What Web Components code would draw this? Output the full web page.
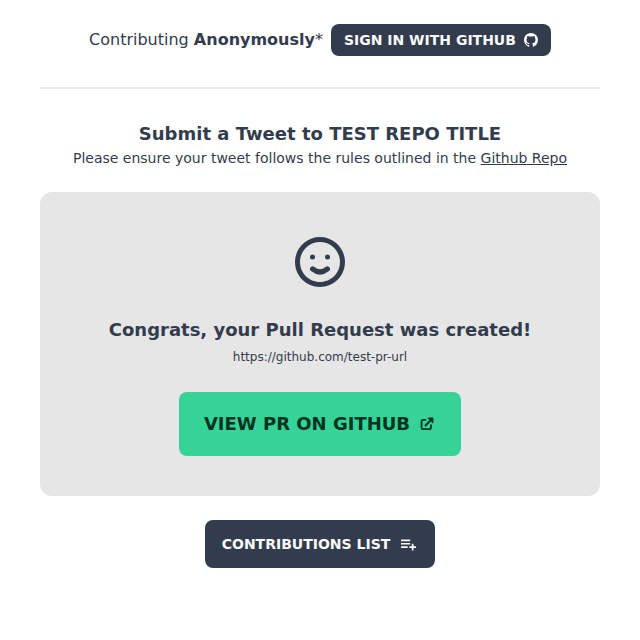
<!DOCTYPE html>
<html lang="en">
<head>
<meta charset="utf-8">
<title>Submit a Tweet</title>
<style>
body{margin:0;background:#fff;color:#333c4d;font-family:"DejaVu Sans",sans-serif;font-size:16px;line-height:24px}
</style>
</head>
<body>
<tweet-page></tweet-page>
<script>
const icons = {
  github: ['0 0 24 24', '<path fill="currentColor" d="M12 0C5.374 0 0 5.373 0 12c0 5.302 3.438 9.8 8.207 11.387.599.111.793-.261.793-.577v-2.234c-3.338.726-4.033-1.416-4.033-1.416-.546-1.387-1.333-1.756-1.333-1.756-1.089-.745.083-.729.083-.729 1.205.084 1.839 1.237 1.839 1.237 1.07 1.834 2.807 1.304 3.492.997.107-.775.418-1.305.762-1.604-2.665-.305-5.467-1.334-5.467-5.931 0-1.311.469-2.381 1.236-3.221-.124-.303-.535-1.524.117-3.176 0 0 1.008-.322 3.301 1.23A11.5 11.5 0 0112 5.803c1.02.005 2.047.138 3.006.404 2.291-1.552 3.297-1.23 3.297-1.23.653 1.653.242 2.874.118 3.176.77.84 1.235 1.911 1.235 3.221 0 4.609-2.807 5.624-5.479 5.921.43.372.823 1.102.823 2.222v3.293c0 .319.192.694.801.576C20.566 21.797 24 17.3 24 12c0-6.627-5.373-12-12-12z"/>'],
  smile: ['0 0 24 24', '<path fill="currentColor" d="M12 2C6.486 2 2 6.486 2 12s4.486 10 10 10 10-4.486 10-10S17.514 2 12 2zm0 18c-4.411 0-8-3.589-8-8s3.589-8 8-8 8 3.589 8 8-3.589 8-8 8z"/><circle cx="9" cy="10" r="1" fill="currentColor"/><circle cx="15" cy="10" r="1" fill="currentColor"/><path d="M9.1 14.8Q12 17.2 14.9 14.8" fill="none" stroke="currentColor" stroke-width="2.15" stroke-linecap="round"/>'],
  external: ['0 0 24 24', '<path fill="none" stroke="currentColor" stroke-width="2.4" stroke-linejoin="round" stroke-linecap="round" d="M10 6.5H6.7a2 2 0 0 0-2 2v8.4a2 2 0 0 0 2 2h8.6a2 2 0 0 0 2-2v-3.3M14.2 4.6h5.2v5.2M10 14L19 5M15.5 4.9l3.6 3.6"/>'],
  list: ['.4 .3 24 24', '<path fill="currentColor" d="M19 15v-3h-2v3h-3v2h3v3h2v-3h3v-2h-.937zM4 7h11v2H4zm0 4h11v2H4zm0 4h8v2H4z"/>']
};
class UiIcon extends HTMLElement {
  connectedCallback(){
    const [box, art] = icons[this.getAttribute('name')];
    this.attachShadow({mode:'open'}).innerHTML = `<style>:host{display:block;flex:none}svg{display:block;width:100%;height:100%}</style><svg viewBox="${box}" aria-hidden="true">${art}</svg>`;
  }
}
class UiButton extends HTMLElement {
  connectedCallback(){
    this.attachShadow({mode:'open'}).innerHTML = `<style>
:host{display:inline-flex}
button{display:flex;align-items:center;justify-content:center;box-sizing:border-box;width:100%;height:48px;padding:0;gap:8px;border:0;border-radius:8px;background:#333c4d;color:#f9fafb;font:600 14px/14px "DejaVu Sans",sans-serif;text-transform:uppercase;white-space:nowrap}
:host([kind=small]) button{height:32px}
:host([kind=success]) button{height:64px;background:#36d399;color:#003320;font-size:18px;line-height:18px}
</style><button><slot></slot></button>`;
  }
}
class TweetPage extends HTMLElement {
  connectedCallback(){
    this.attachShadow({mode:'open'}).innerHTML = `<style>
:host{display:flex;flex-direction:column;align-items:center;padding:24px 40px}
header{display:flex;align-items:center;justify-content:center;gap:8px;height:32px;white-space:nowrap}
hr{width:100%;height:2px;border:0;margin:31px 0;background:#e9e9e9}
h1,h2{font-size:18px;line-height:28px;margin:0;font-weight:700}
p{margin:0;font-size:14px;line-height:20px;white-space:nowrap}
a{color:inherit}
section{width:100%;height:304px;box-sizing:border-box;margin:24px 0;border-radius:12px;background:#e6e6e6;display:flex;flex-direction:column;align-items:center;padding-top:40px}
section > ui-icon{width:60px;height:60px}
h2{margin-top:24px}
small{font-size:12px;line-height:16px;margin-top:5px}
.sign ui-icon{width:14px;height:14px}
.view ui-icon{width:18px;height:18px}
.list ui-icon{width:20px;height:20px}
.sign{width:220px}.view{width:282px;margin-top:27px}.list{width:230px}
</style>
<header><span>Contributing <b>Anonymously</b>*</span><ui-button class="sign" kind="small">Sign in with GitHub<ui-icon name="github"></ui-icon></ui-button></header>
<hr>
<h1>Submit a Tweet to TEST REPO TITLE</h1>
<p>Please ensure your tweet follows the rules outlined in the <a href="#">Github Repo</a></p>
<section><ui-icon name="smile"></ui-icon><h2>Congrats, your Pull Request was created!</h2><small>https://github.com/test-pr-url</small>
<ui-button class="view" kind="success">View PR on GitHub<ui-icon name="external"></ui-icon></ui-button></section>
<ui-button class="list">Contributions List<ui-icon name="list"></ui-icon></ui-button>`;
  }
}
customElements.define('ui-icon', UiIcon);
customElements.define('ui-button', UiButton);
customElements.define('tweet-page', TweetPage);
</script>
</body>
</html>
